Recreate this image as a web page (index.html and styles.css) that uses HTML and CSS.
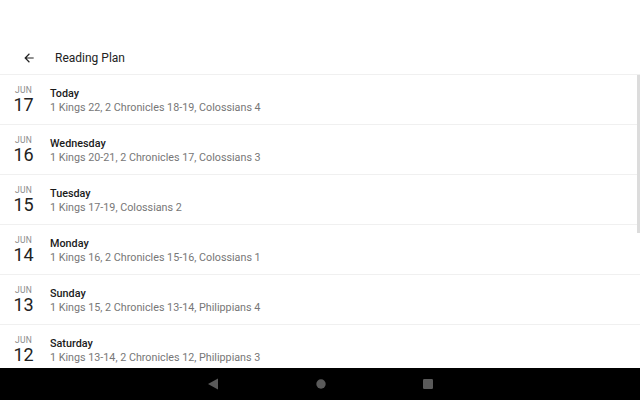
FILE: index.html
```html
<!DOCTYPE html>
<html lang="en">

<head>
    <meta charset="UTF-8">
    <meta name="viewport" content="width=device-width, initial-scale=1.0">
    <title>Reading Plan</title>
    <link rel="stylesheet" href="styles.css">
</head>

<body>
    <div class="screen">
        <!-- Toolbar -->
        <div class="toolbar">
            <svg class="back" width="14" height="14" viewBox="0 0 24 24">
                <path d="M20 11H7.83l5.59-5.59L12 4l-8 8 8 8 1.41-1.41L7.83 13H20v-2z" fill="#222"/>
            </svg>
            <span class="title">Reading Plan</span>
        </div>

        <!-- Plan list -->
        <div class="list">
            <div class="row">
                <div class="date"><span class="month">JUN</span><span class="day">17</span></div>
                <div class="text"><div class="name">Today</div><div class="readings">1 Kings 22, 2 Chronicles 18-19, Colossians 4</div></div>
            </div>
            <div class="row">
                <div class="date"><span class="month">JUN</span><span class="day">16</span></div>
                <div class="text"><div class="name">Wednesday</div><div class="readings">1 Kings 20-21, 2 Chronicles 17, Colossians 3</div></div>
            </div>
            <div class="row">
                <div class="date"><span class="month">JUN</span><span class="day">15</span></div>
                <div class="text"><div class="name">Tuesday</div><div class="readings">1 Kings 17-19, Colossians 2</div></div>
            </div>
            <div class="row">
                <div class="date"><span class="month">JUN</span><span class="day">14</span></div>
                <div class="text"><div class="name">Monday</div><div class="readings">1 Kings 16, 2 Chronicles 15-16, Colossians 1</div></div>
            </div>
            <div class="row">
                <div class="date"><span class="month">JUN</span><span class="day">13</span></div>
                <div class="text"><div class="name">Sunday</div><div class="readings">1 Kings 15, 2 Chronicles 13-14, Philippians 4</div></div>
            </div>
            <div class="row">
                <div class="date"><span class="month">JUN</span><span class="day">12</span></div>
                <div class="text"><div class="name">Saturday</div><div class="readings">1 Kings 13-14, 2 Chronicles 12, Philippians 3</div></div>
            </div>
            <div class="scroll-thumb"></div>
        </div>

        <!-- System navigation bar -->
        <div class="navbar">
            <svg width="12" height="12" viewBox="0 0 12 12"><path d="M11 0.5V11.5L1 6z" fill="#5a5a5a"/></svg>
            <svg width="10" height="10" viewBox="0 0 10 10"><circle cx="5" cy="5" r="4.7" fill="#5a5a5a"/></svg>
            <svg width="10" height="10" viewBox="0 0 10 10"><rect x="0" y="0" width="10" height="10" rx="1.2" fill="#5a5a5a"/></svg>
        </div>
    </div>
</body>

</html>
```

FILE: styles.css
```css
body {
    margin: 0;
    padding: 0;
    font-family: Roboto, 'Noto Sans', sans-serif;
    background-color: white;
}

.screen {
    width: 640px;
    height: 400px;
    display: flex;
    flex-direction: column;
    overflow: hidden;
}

/* Toolbar */
.toolbar {
    height: 34px;
    margin-top: 40px;
    display: flex;
    align-items: center;
    border-bottom: 1px solid #f0f0f0;
    flex-shrink: 0;
}

.back {
    margin-left: 22px;
    margin-right: 19px;
    margin-top: 1px;
}

.title {
    font-size: 12px;
    color: #222;
    margin-top: 1px;
}

/* List */
.list {
    flex: 1;
    position: relative;
    overflow: hidden;
}

.row {
    height: 49px;
    display: flex;
    align-items: center;
    border-bottom: 1px solid #f0f0f0;
}

.date {
    width: 47px;
    display: flex;
    flex-direction: column;
    align-items: center;
    margin-top: 1px;
}

.month {
    font-size: 8.5px;
    color: #8a8a8a;
    letter-spacing: 0.3px;
    line-height: 10px;
}

.day {
    font-size: 18px;
    color: #222;
    line-height: 20px;
}

.text {
    margin-left: 3px;
    margin-top: 2px;
}

.name {
    font-size: 10.8px;
    font-weight: 500;
    color: #1a1a1a;
    line-height: 14px;
}

.readings {
    font-size: 10.75px;
    color: #777;
    line-height: 14px;
}

.scroll-thumb {
    position: absolute;
    right: 0;
    top: 0;
    width: 3px;
    height: 158px;
    background-color: #dcdcdc;
}

/* Navigation bar */
.navbar {
    height: 32px;
    background-color: black;
    display: flex;
    align-items: center;
    justify-content: center;
    gap: 97px;
    flex-shrink: 0;
}
```
